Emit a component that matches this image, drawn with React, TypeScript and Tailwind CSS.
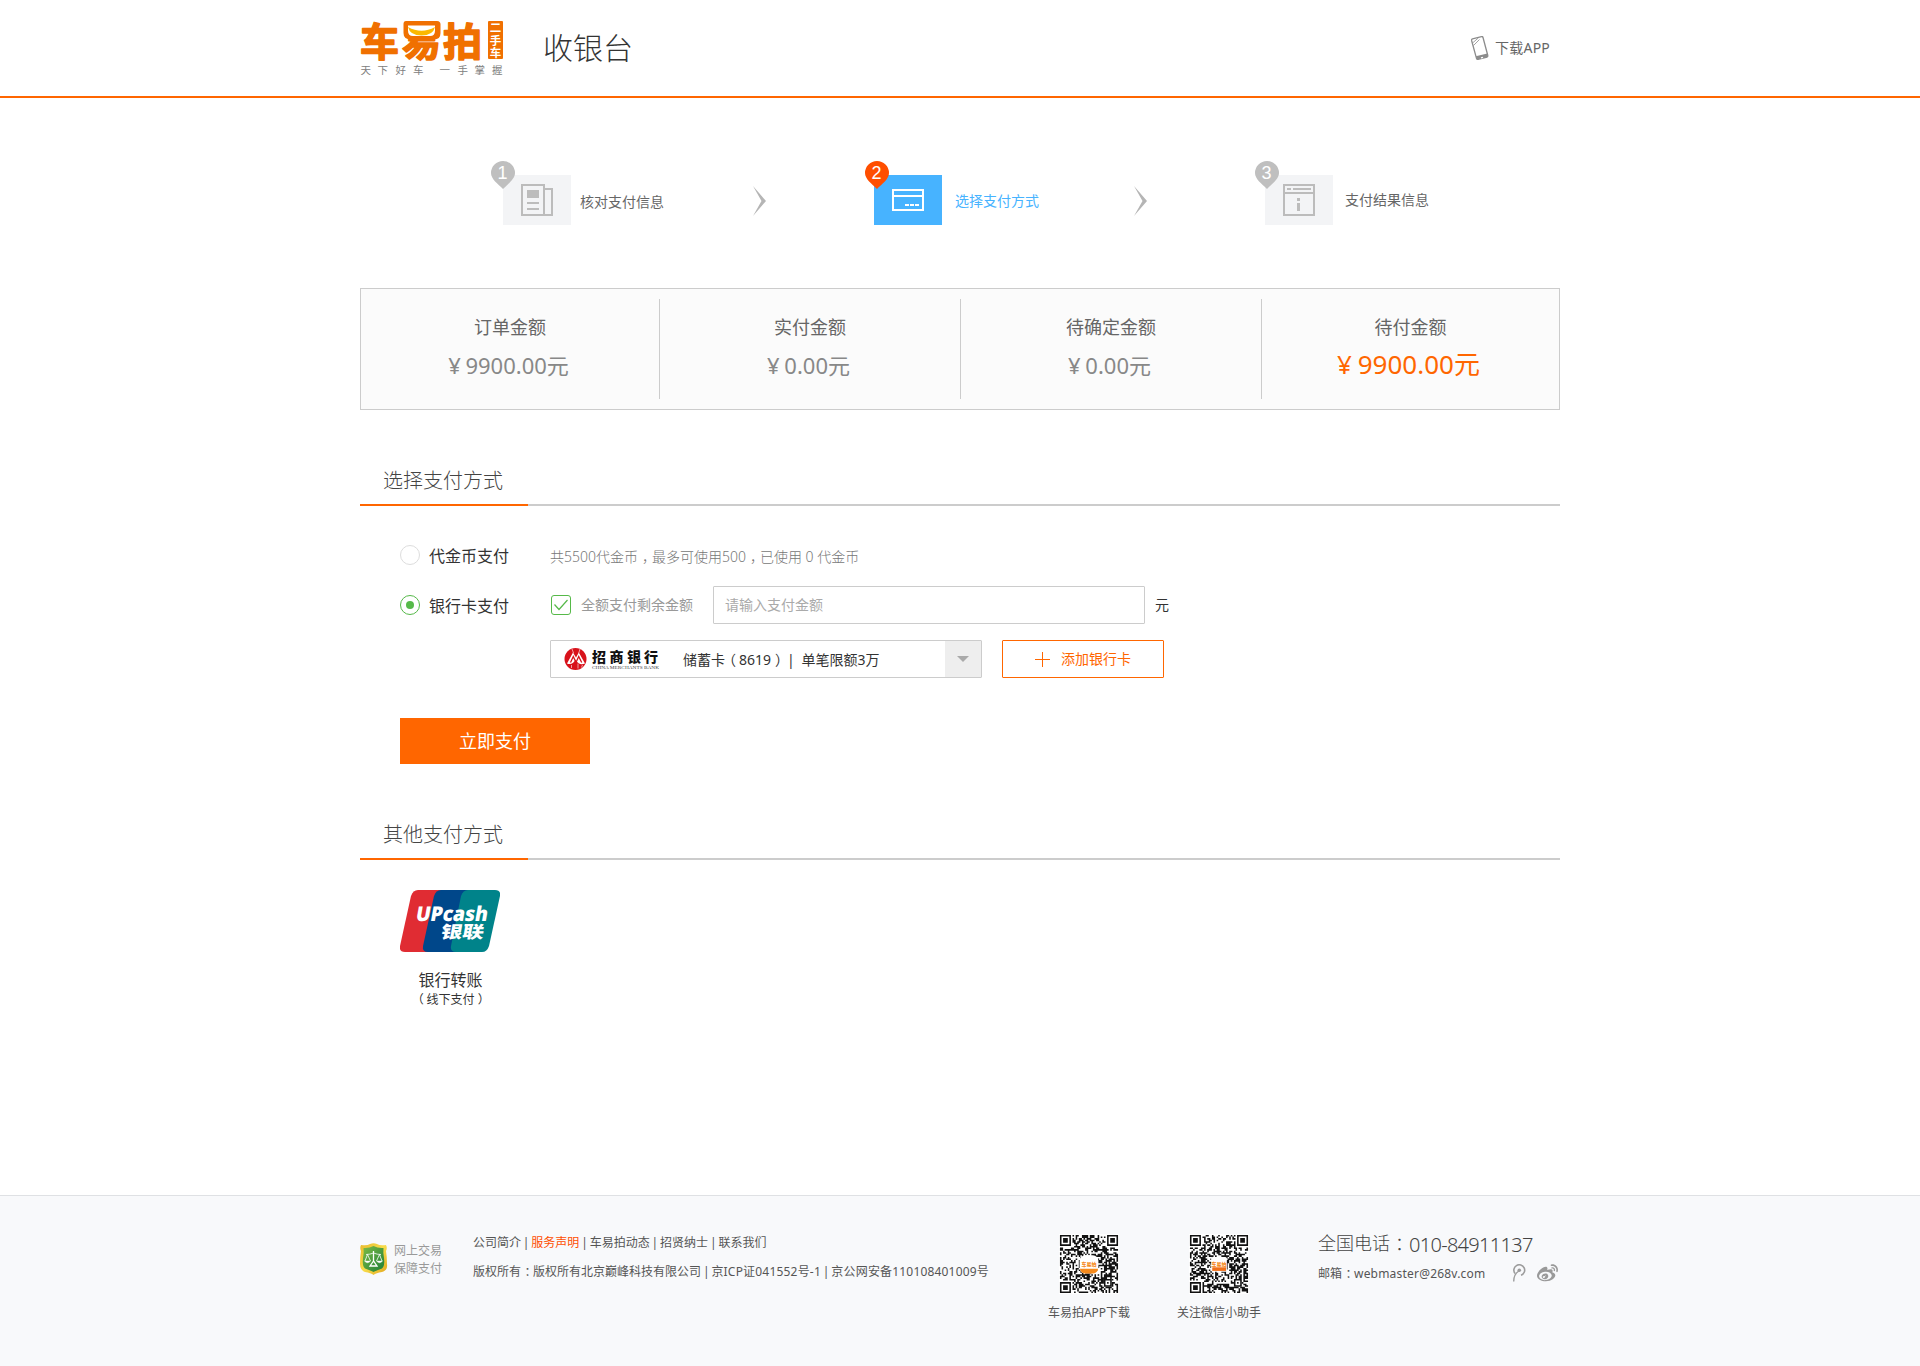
import type { ReactNode } from 'react'
import { FaWeibo } from 'react-icons/fa'

/** Full-width punctuation whose glyph sits at the left of its em box, nudged to the middle. */
function P({ children }: { children: ReactNode }) {
  return <span className="inline-block w-[1em] whitespace-nowrap indent-[0.28em] leading-none">{children}</span>
}

/** Opening bracket, whose glyph sits at the right of its em box. */
function Open() {
  return <span className="inline-block w-[1em] whitespace-nowrap indent-[-0.22em] leading-none">（</span>
}

function BrandLogo() {
  return (
    <svg width="144" height="76" viewBox="0 -16 144 76" className="shrink-0" fontFamily='"Noto Sans CJK SC", sans-serif'>
      <g fill="#f07000" stroke="#f07000" strokeWidth="1.500" strokeLinejoin="round" fontWeight="700" fontSize="39">
        <text x="0" y="35.5" textLength="39" lengthAdjust="spacingAndGlyphs">车</text>
        <text x="42" y="35.5" textLength="39" lengthAdjust="spacingAndGlyphs">易</text>
        <text x="83" y="35.5" textLength="39" lengthAdjust="spacingAndGlyphs">拍</text>
      </g>
      <path d="M46 1h31q3.500 0 3.500 3.500V13q0 6.500-6.500 6.500H51q-7.500 0-7.500-6.500V4Q43.500 1 46 1z" fill="#f07000" />
      <path d="M48 5.500h27v5q0 5.500-5 5.500H53q-5 0-5-5.500z" fill="#fff" />
      <path d="M48 7q13.500 7.500 27 0-2 8.500-13.500 8.500T48 7z" fill="#fbb900" />
      <rect x="128" y="1" width="15" height="38" rx="1" fill="#f07000" />
      <g fill="#fff" fontWeight="700" fontSize="11.500" textAnchor="middle">
        <text x="135.500" y="12">二</text>
        <text x="135.500" y="24.500">手</text>
        <text x="135.500" y="36.500">车</text>
      </g>
      <g fill="#808080" fontSize="10.500">
        <text y="54" x="0.500 17.500 35.500 53 79.500 97.500 114.500 132">天下好车一手掌握</text>
      </g>
    </svg>
  )
}

function PhoneIcon() {
  return (
    <svg width="20" height="26" viewBox="0 0 20 26" className="shrink-0" fill="none" stroke="#8c8c8c">
      <path d="M1.600 5.500Q1.300 4.200 2.500 3.900L11.500 1.600Q12.700 1.300 13 2.500L17.800 20.500Q18.100 21.700 17 22L8 24.300Q6.800 24.600 6.500 23.400Z" strokeWidth="1.300" />
      <path d="M5.800 21.300L17.300 18.400L18 21.800L7 24.500Z" fill="#8c8c8c" stroke="none" />
      <path d="M11 22.800l2-.5" stroke="#fff" strokeWidth="1.300" />
      <path d="M2.500 8L8.500 2.800M3.500 10.500L9.500 4.500" strokeWidth="0.800" />
    </svg>
  )
}

function Pin({ n, active }: { n: number; active?: boolean }) {
  return (
    <svg width="24" height="28" viewBox="0 0 24 28">
      <path d="M12 0a12 12 0 0 1 12 12c0 6-7 11-12 16C7 23 0 18 0 12A12 12 0 0 1 12 0z" fill={active ? '#ff4e00' : '#bfbfbf'} />
      <text x="11.500" y="18" textAnchor="middle" fontSize="18" fill="#fff" fontFamily='"Liberation Sans", sans-serif'>
        {n}
      </text>
    </svg>
  )
}

function DocumentIcon() {
  return (
    <svg width="32" height="32" viewBox="0 0 32 32" fill="none" stroke="#bcbcbc" strokeWidth="2">
      <path d="M1 1h22v30H1zM23 5h8v26h-8" />
      <path d="M6 6h12v8H6z" fill="#bcbcbc" stroke="none" />
      <path d="M6 19h12M6 25h12" />
    </svg>
  )
}

function CardIcon() {
  return (
    <svg width="32" height="22" viewBox="0 0 32 22" fill="none" stroke="#fff" strokeWidth="2">
      <path d="M1 1h30v20H1zM1 7h30" />
      <path d="M13 16h4M18 16h4M23 16h4" />
    </svg>
  )
}

function ResultIcon() {
  return (
    <svg width="32" height="32" viewBox="0 0 32 32" fill="none" stroke="#bcbcbc" strokeWidth="2">
      <path d="M1 1h30v30H1zM1 9h30" />
      <path d="M4 5h4M10 5h18" />
      <path d="M15.500 14v3M15.500 19v8" strokeWidth="3" />
    </svg>
  )
}

function Chevron() {
  return (
    <svg width="14" height="30" viewBox="0 0 14 30" className="shrink-0" fill="#b5b5b5">
      <path d="M0 0L13 15L0 30L8.500 15Z" />
    </svg>
  )
}

function Step({ n, label, active, icon, shift, gap, drop }: { n: number; label: string; active?: boolean; icon: ReactNode; shift: string; gap: string; drop: string }) {
  return (
    <div className={`flex items-center ${gap}`}>
      <div className={`relative flex h-[50px] w-[68px] items-center justify-center ${active ? 'bg-[#47b3ff]' : 'bg-[#f3f4f6]'}`}>
        <div className={`absolute -top-3.5 ${shift}`}>
          <Pin n={n} active={active} />
        </div>
        {icon}
      </div>
      <span className={`text-sm leading-none ${drop} ${active ? 'text-[#47b3ff]' : 'text-[#666]'}`}>{label}</span>
    </div>
  )
}

function Amount({ label, value, width, due }: { label: string; value: string; width: string; due?: boolean }) {
  return (
    <div className={`my-2.5 flex flex-col items-center pt-[19px] ${width} ${due ? '' : 'border-r border-[#ccc]'}`}>
      <span className="text-lg leading-none text-[#666]">{label}</span>
      <span className={`flex h-[26px] items-center leading-none ${due ? 'mt-[15px] pr-1 text-[26px] text-[#ff6600]' : 'mt-4 pr-[3px] text-[22px] text-[#888]'}`}>
        <span className="whitespace-pre tracking-[-0.5px]">¥ </span>
        {value}
      </span>
    </div>
  )
}

function SectionTitle({ children }: { children: ReactNode }) {
  return (
    <h2 className="mt-11 flex h-[52px] text-xl font-light leading-none text-[#444]">
      <span className="flex w-[168px] items-center border-b-2 border-[#ff6600] pl-[23px] pt-[3px]">{children}</span>
      <span className="flex-1 border-b-2 border-[#ccc]" />
    </h2>
  )
}

function Radio({ checked }: { checked?: boolean }) {
  return (
    <span className={`flex size-5 items-center justify-center rounded-full border ${checked ? 'border-[#56b949]' : 'border-[#ddd]'}`}>
      {checked && <span className="size-2 rounded-full bg-[#56b949]" />}
    </span>
  )
}

function MerchantsBankLogo() {
  return (
    <svg width="98" height="26" viewBox="0 0 98 26" className="shrink-0">
      <circle cx="11.500" cy="13" r="11" fill="#d8121b" />
      <path d="M3 17.500L9 6.500L12 11.500L14.800 6.500L21 17.500Q15 20 11.500 13.500Q8.500 19.500 3 17.500z" fill="#fff" />
      <path d="M6.500 16.500L9.300 10.500L12 16.500L14.700 10.500L17.700 16.500" fill="none" stroke="#d8121b" strokeWidth="1.300" />
      <path d="M8 3l1.500 4M16 3l-1.200 4M7.500 19v3M14 17.500v5M18.500 19l-1 2.500" fill="none" stroke="#fff" strokeWidth="0.600" />
      <g fontFamily='"Noto Sans CJK SC", sans-serif' fontWeight="900" fontSize="14" fill="#111">
        <text x="28 45.500 63 80" y="15.500">招商银行</text>
      </g>
      <text x="28" y="22.500" fontFamily='"Liberation Serif", serif' fontSize="4.800" fill="#444" textLength="67" lengthAdjust="spacingAndGlyphs">
        CHINA MERCHANTS BANK
      </text>
    </svg>
  )
}

function UnionPayLogo() {
  return (
    <svg width="100" height="62" viewBox="0 0 100 62">
      <path d="M18 0H44L30 62H5Q-1 62 0 56L11 6Q13 0 18 0z" fill="#e02c33" />
      <path d="M41 0H72L58 62H28Q22 62 23 56L34 6Q36 0 41 0z" fill="#00478a" />
      <path d="M68 0H95Q101 0 100 6L89 56Q87 62 82 62H56Q50 62 51 56L61 6Q63 0 68 0z" fill="#00838a" />
      <g fill="#fff" transform="skewX(-10)">
        <text x="20.500" y="31.500" fontFamily='"Open Sans", sans-serif' fontWeight="800" fontSize="20.500" textLength="72" lengthAdjust="spacingAndGlyphs">
          UPcash
        </text>
        <text x="48.500" y="48.500" fontFamily='"Noto Sans CJK SC", sans-serif' fontWeight="900" fontSize="17" textLength="43" lengthAdjust="spacingAndGlyphs">
          银联
        </text>
      </g>
    </svg>
  )
}

function Shield() {
  return (
    <svg width="28" height="34" viewBox="0 0 28 34" className="shrink-0">
      <defs>
        <linearGradient id="gold" x1="0" y1="0" x2="1" y2="1">
          <stop offset="0" stopColor="#e8b92c" />
          <stop offset="0.500" stopColor="#f7dc4a" />
          <stop offset="1" stopColor="#e0a41c" />
        </linearGradient>
        <linearGradient id="leaf" x1="0" y1="0" x2="1" y2="1">
          <stop offset="0" stopColor="#7dbb45" />
          <stop offset="1" stopColor="#1e7f38" />
        </linearGradient>
      </defs>
      <path d="M1 3Q7 4 10 2Q13.500 .3 17 2Q20 4 26 3Q27.500 6 26 9Q27 15 27 22Q28 28 22 30Q16 31 13.500 33Q11 31 5 30Q0 28 0 22Q0 15 1 9Q-.5 6 1 3z" fill="url(#gold)" />
      <path d="M3.500 6Q9 6.500 13.500 4Q18 6.500 23.500 6Q23 10 24 16Q25 24 22 26.500Q17 28 13.500 30Q10 28 5 26.500Q2 24 3 16Q4 10 3.500 6z" fill="url(#leaf)" />
      <g fill="none" stroke="#fff" strokeWidth="1">
        <path d="M6 12.500Q10 12.500 13.500 11Q17 12.500 21 12.500M7.500 12.500L5 19M7.500 12.500L10.500 19M19.500 12.500L16.500 19M19.500 12.500L22 19" strokeWidth="0.800" />
        <path d="M4.500 19h6q-3 3.500-6 0zM16.500 19h6q-3 3.500-6 0z" fill="#fff" strokeWidth="0.400" />
        <path d="M13.500 9v11M13.500 19l-3.500 5h7z" strokeWidth="1.300" />
      </g>
    </svg>
  )
}

const QR = 37

function qrPath(seed: number) {
  let s = seed
  const next = () => (s = (s * 1103515245 + 12345) % 2147483648) / 2147483648
  let d = ''
  for (let y = 0; y < QR; y++) {
    for (let x = 0; x < QR; x++) {
      const v = next()
      const corner = (x < 8 && y < 8) || (x > QR - 9 && y < 8) || (x < 8 && y > QR - 9)
      const align = x >= 28 && x <= 32 && y >= 28 && y <= 32
      if (!corner && !align && v > 0.47) d += `M${x} ${y}h1v1h-1z`
    }
  }
  return d
}

function QrCode({ seed, badge }: { seed: number; badge: 'round' | 'square' }) {
  return (
    <svg width="60" height="60" viewBox="-0.600 -0.600 38.200 38.200" className="bg-white">
      <path d={qrPath(seed)} fill="#111" />
      <g fill="none" stroke="#111">
        <path d="M.5 .5h6v6h-6zM30.500 .5h6v6h-6zM.5 30.500h6v6h-6zM28.500 28.500h4v4h-4z" />
      </g>
      <path d="M2 2h3v3H2zM32 2h3v3h-3zM2 32h3v3H2zM30 30h1v1h-1z" fill="#111" />
      {badge === 'round' ? (
        <>
          <rect x="12.500" y="13" width="12" height="11.500" rx="3.500" fill="#fff" />
          <path d="M12.700 21.500h11.600q-.5 3-3.500 3h-4.600q-3 0-3.500-3z" fill="#f58a1c" />
        </>
      ) : (
        <>
          <rect x="13.500" y="14" width="10" height="9.500" rx="1" fill="#fff" />
          <path d="M14.200 20.600h8.800v2.300h-8.800z" fill="#f0701a" />
        </>
      )}
      <text x="18.500" y="19.500" fontSize="3.200" fontWeight="900" textAnchor="middle" fill="#f58a1c" fontFamily='"Noto Sans CJK SC", sans-serif'>
        车易拍
      </text>
    </svg>
  )
}

function TencentWeiboIcon() {
  return (
    <svg width="14" height="18" viewBox="0 0 14 18" fill="none" stroke="#9c9c9c" className="shrink-0">
      <path d="M3 9.500A5.400 5.400 0 1 1 9 11.300" strokeWidth="1.600" />
      <circle cx="7.300" cy="6.300" r="1.800" fill="#9c9c9c" stroke="none" />
      <path d="M6.800 7Q1.600 10.500 1.700 17.500" strokeWidth="1.400" />
    </svg>
  )
}

export default function App() {
  return (
    <div className="flex min-h-[1366px] flex-col bg-white font-['Noto_Sans','Noto_Sans_CJK_SC',sans-serif] text-[#333]">
      <header className="h-[98px] border-b-2 border-[#ff6600]">
        <div className="mx-auto flex h-full w-[1200px] items-start">
          <div className="pt-1">
            <BrandLogo />
          </div>
          <h1 className="ml-[39px] mt-[33px] text-[30px] font-light leading-none">收银台</h1>
          <a className="ml-auto mr-2.5 mt-[35px] flex items-center text-sm leading-none text-[#666]">
            <PhoneIcon />
            <span className="ml-[5px] tracking-[0.2px]">下载APP</span>
          </a>
        </div>
      </header>

      <main className="mx-auto w-[1200px] flex-1">
        <div className="flex items-center pl-[143px] pt-[77px]">
          <Step n={1} label="核对支付信息" icon={<DocumentIcon />} shift="-left-3" gap="gap-[9px]" drop="pt-[3px]" />
          <div className="ml-[89px] mr-[107px] pt-0.5">
            <Chevron />
          </div>
          <Step n={2} label="选择支付方式" active icon={<CardIcon />} shift="-left-[9px]" gap="gap-[13px]" drop="pt-px" />
          <div className="ml-[95px] mr-[117px] pt-0.5">
            <Chevron />
          </div>
          <Step n={3} label="支付结果信息" icon={<ResultIcon />} shift="-left-2.5" gap="gap-3" drop="pt-0" />
        </div>

        <div className="mt-[63px] flex h-[122px] border border-[#ccc] bg-[#fbfbfb]">
          <Amount label="订单金额" value="9900.00元" width="w-[299px]" />
          <Amount label="实付金额" value="0.00元" width="w-[301px]" />
          <Amount label="待确定金额" value="0.00元" width="w-[301px]" />
          <Amount label="待付金额" value="9900.00元" width="flex-1" due />
        </div>

        <SectionTitle>选择支付方式</SectionTitle>
        <div className="pl-10 pt-[39px] leading-none">
          <div className="flex h-5 items-center">
            <Radio />
            <span className="ml-[9px] w-[121px] pt-px">代金币支付</span>
            <span className="whitespace-nowrap pt-[3px] text-sm font-light leading-none text-[#777]">
              共5500代金币<P>，</P>最多可使用500<P>，</P>已使用 0 代金币
            </span>
          </div>
          <div className="mt-[21px] flex h-[38px] items-center">
            <Radio checked />
            <span className="ml-[9px] w-[122px] pt-px">银行卡支付</span>
            <span className="flex size-5 items-center justify-center rounded-[3px] border border-[#56b949]">
              <svg width="16" height="14" viewBox="0 0 16 14" fill="none" stroke="#56b949" strokeWidth="1.200">
                <path d="M1.500 6.500L6 11.500L14.500 2" />
              </svg>
            </span>
            <span className="ml-2.5 w-[132px] text-sm leading-none text-[#999]">全额支付剩余金额</span>
            <div className="flex h-[38px] w-[432px] items-center rounded-[1px] border border-[#ccc] pl-[11px] text-sm leading-none text-[#aaa]">请输入支付金额</div>
            <span className="ml-2.5 text-sm leading-none">元</span>
          </div>
          <div className="mt-4 flex pl-[150px] text-sm leading-none">
            <div className="flex h-[38px] w-[432px] items-center rounded-[1px] border border-[#ccc] pl-[13px]">
              <MerchantsBankLogo />
              <span className="ml-[21px] whitespace-pre pt-px">
                储蓄卡<Open />8619<P>）</P>
                <span className="ml-0.5 mr-[3px]">|</span> 单笔限额3万
              </span>
              <span className="ml-auto flex h-full w-9 items-center justify-center bg-[#eee]">
                <svg width="12" height="6" viewBox="0 0 12 6" fill="#aaa">
                  <path d="M0 0h12L6 6z" />
                </svg>
              </span>
            </div>
            <button className="ml-5 flex h-[38px] w-[162px] items-center rounded-[1px] border border-[#ff6600] pl-8 leading-none text-[#ff6600]">
              <svg width="15" height="15" viewBox="0 0 15 15" stroke="#ff6600">
                <path d="M7.500 0v15M0 7.500h15" />
              </svg>
              <span className="ml-[11px]">添加银行卡</span>
            </button>
          </div>
          <button className="mt-10 flex h-[46px] w-[190px] items-center justify-center bg-[#ff6600] text-lg leading-none text-white">立即支付</button>
        </div>

        <SectionTitle>其他支付方式</SectionTitle>
        <div className="ml-10 flex w-[101px] flex-col items-start pt-[30px] leading-none">
          <UnionPayLogo />
          <span className="mt-5 self-center">银行转账</span>
          <span className="mt-1.5 self-center whitespace-nowrap text-xs leading-none">
            <Open />
            线下支付
            <P>）</P>
          </span>
        </div>
      </main>

      <footer className="h-[171px] border-t border-[#dfe1e4] bg-[#f8f9fb]">
        <div className="mx-auto flex w-[1200px] items-start text-xs leading-none text-[#555]">
          <div className="mt-[46px] flex w-[113px] text-[#999]">
            <Shield />
            <div className="ml-1.5 mt-[3px] flex flex-col gap-1.5">
              <span>网上交易</span>
              <span>保障支付</span>
            </div>
          </div>
          <div className="mt-[41px] flex w-[574px] flex-col gap-[17px]">
            <span className="whitespace-nowrap [word-spacing:-1.25px]">
              公司简介 | <span className="text-[#ff4e00]">服务声明</span> | 车易拍动态 | 招贤纳士 | 联系我们
            </span>
            <span className="whitespace-nowrap [word-spacing:-1.25px]">
              版权所有<P>：</P>版权所有北京巅峰科技有限公司 | <span className="tracking-[0.2px]">京ICP证041552号-1</span> |{' '}
              <span className="tracking-[0.18px]">京公网安备110108401009号</span>
            </span>
          </div>
          <div className="mt-[38px] flex w-[84px] flex-col items-center">
            <QrCode seed={20477} badge="round" />
            <span className="mt-[13px] whitespace-nowrap">车易拍APP下载</span>
          </div>
          <div className="ml-[46px] mt-[38px] flex w-[84px] flex-col items-center">
            <QrCode seed={9131} badge="square" />
            <span className="mt-[13px] whitespace-nowrap">关注微信小助手</span>
          </div>
          <div className="ml-[57px] mt-[37px]">
            <div className="flex h-5 items-center whitespace-nowrap text-lg font-light leading-none text-[#444]">
              <span>
                全国电话<P>：</P>
              </span>
              <span className="ml-px pt-[3px] text-xl leading-none tracking-[-0.7px]">010-84911137</span>
            </div>
            <div className="mt-[11px] flex h-[18px] items-center">
              <span className="w-[194px] whitespace-nowrap pt-0.5">
                邮箱<P>：</P>
                <span className="tracking-[0.2px]">webmaster@268v.com</span>
              </span>
              <TencentWeiboIcon />
              <FaWeibo className="ml-[11px] size-[21px] text-[#999]" />
            </div>
          </div>
        </div>
      </footer>
    </div>
  )
}
